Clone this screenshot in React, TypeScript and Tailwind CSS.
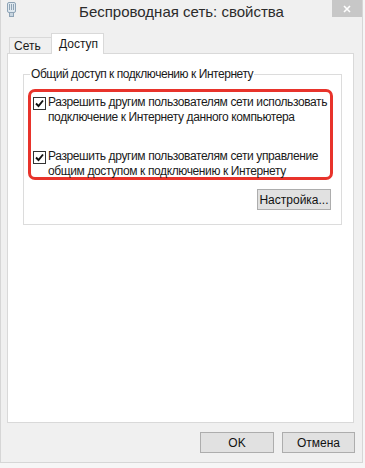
import React from "react";

const font = { fontFamily: '"Liberation Sans", Arial, sans-serif' };

function Check() {
  return (
    <span className="w-[13px] h-[13px] border border-[#333333] bg-white flex items-center justify-center shrink-0 mt-[2px]">
      <svg width="9" height="9" viewBox="0 0 9 9">
        <path d="M1 4.5 L3.5 7 L8 1.5" fill="none" stroke="#111" strokeWidth="1.9" />
      </svg>
    </span>
  );
}

function Btn({ label, w }: { label: string; w: string }) {
  return (
    <button
      className={`${w} h-[21px] bg-[#e1e1e1] border border-[#adadad] text-[12px] text-[#111] leading-none flex items-center justify-center whitespace-nowrap`}
    >
      {label}
    </button>
  );
}

export default function App() {
  return (
    <div className="w-[365px] h-[468px] bg-[#f6f6f6] text-[#1a1a1a]" style={font}>
      <div className="w-[363px] h-[463px] bg-[#f0f0f0] border-x border-b border-[#d6d6d6] flex flex-col">
        {/* Title bar */}
        <div className="h-[33px] grid grid-cols-[1fr_auto_1fr] items-start">
          <div className="pl-[6px] pt-[2px]">
            <svg width="9" height="16" viewBox="0 0 9 16">
              <rect x="0.5" y="0.5" width="8" height="10" rx="1.5" fill="#dfe8ef" stroke="#8ea3b5" />
              <line x1="2.5" y1="2" x2="2.5" y2="8" stroke="#8ea3b5" />
              <line x1="4.5" y1="2" x2="4.5" y2="8" stroke="#8ea3b5" />
              <line x1="6.5" y1="2" x2="6.5" y2="8" stroke="#8ea3b5" />
              <rect x="2.5" y="10.5" width="4" height="4" fill="#c8d5e0" stroke="#8ea3b5" />
            </svg>
          </div>
          <div className="pt-[2px] text-[15px] leading-[20px] text-[#2b2b2b] whitespace-nowrap">
            Беспроводная сеть: свойства
          </div>
          <div className="flex justify-end">
            <div className="w-[30px] h-[17px] bg-[#c7c7c7] flex items-center justify-center">
              <svg width="8" height="8" viewBox="0 0 8 8">
                <path d="M1 1 L7 7 M7 1 L1 7" stroke="#ffffff" strokeWidth="1.6" />
              </svg>
            </div>
          </div>
        </div>

        {/* Tabs */}
        <div className="pl-[6px] flex flex-col">
          <div className="h-[20px] flex items-end pl-[2px]">
            <div className="w-[42px] h-[16px] border-t border-l border-[#d9d9d9] bg-[#f0f0f0] text-[12px] leading-[14px] pl-[4px] pt-[1px]">
              Сеть
            </div>
            <div className="w-[53px] h-[21px] border-t border-x border-[#d9d9d9] bg-white text-[12px] leading-[14px] pl-[7px] pt-[3px] relative -mb-px z-10">
              Доступ
            </div>
          </div>
          <div className="w-[347px] h-[370px] border border-[#d9d9d9] bg-white pl-[15px] pt-[13px]">
            <fieldset className="w-[319px] h-[158px] border border-[#dcdcdc] px-0">
              <legend className="ml-[6px] px-[1px] text-[12px] leading-[14px] tracking-[-0.45px] whitespace-nowrap">
                Общий доступ к подключению к Интернету
              </legend>
              <div className="ml-[4px] mt-[8px] w-[305px] h-[91px] border-[3px] border-[#e8332b] rounded-[7px] pl-[2px] pt-[3px] flex flex-col gap-[24px]">
                <div className="flex gap-[2px]">
                  <Check />
                  <div className="text-[12px] leading-[15px] tracking-[-0.38px] whitespace-nowrap">
                    Разрешить другим пользователям сети использовать
                    <br />
                    подключение к Интернету данного компьютера
                  </div>
                </div>
                <div className="flex gap-[2px]">
                  <Check />
                  <div className="text-[12px] leading-[15px] tracking-[-0.38px] whitespace-nowrap">
                    Разрешить другим пользователям сети управление
                    <br />
                    общим доступом к подключению к Интернету
                  </div>
                </div>
              </div>
              <div className="flex justify-end pr-[10px] mt-[9px]">
                <Btn label="Настройка..." w="w-[74px]" />
              </div>
            </fieldset>
          </div>
        </div>

        {/* Bottom buttons */}
        <div className="flex justify-end gap-[8px] pr-[7px] pt-[9px]">
          <Btn label="OK" w="w-[74px]" />
          <Btn label="Отмена" w="w-[73px]" />
        </div>
      </div>
    </div>
  );
}
